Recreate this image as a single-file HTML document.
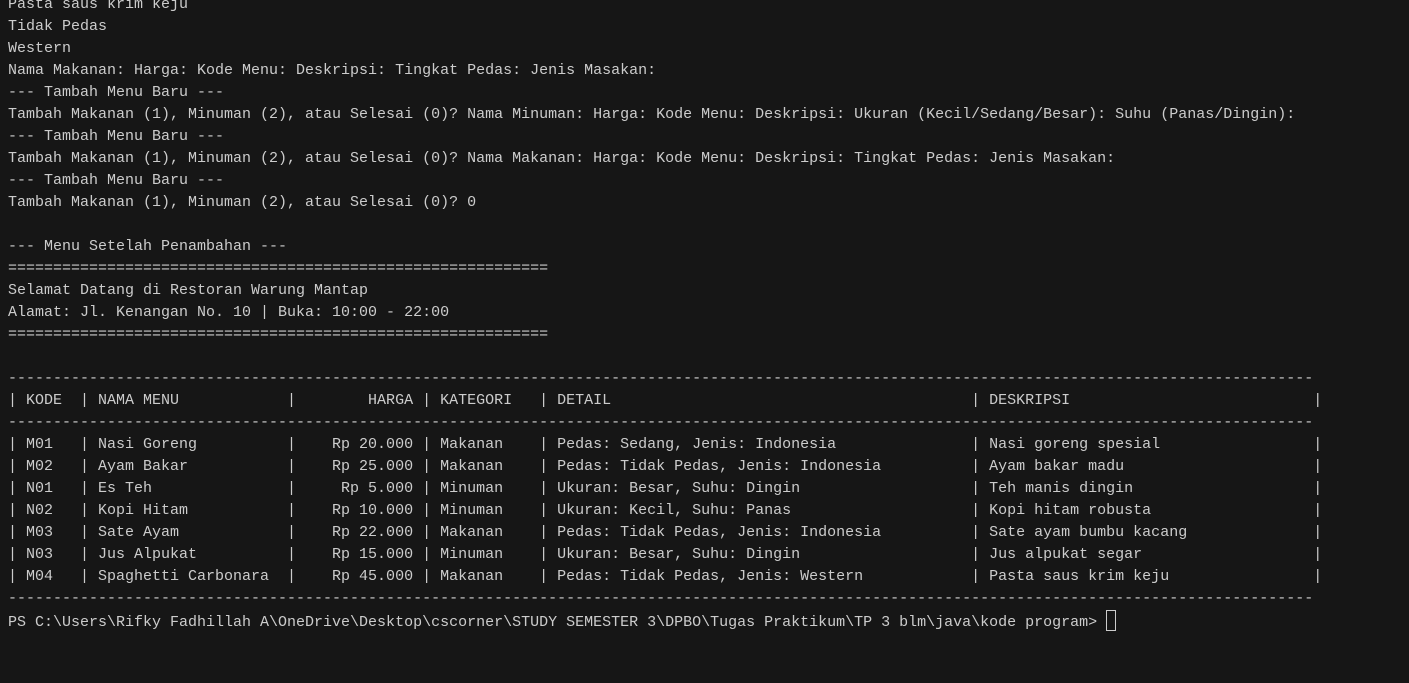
<!DOCTYPE html>
<html><head><style>
html,body{margin:0;padding:0;background:#161616;width:1409px;height:683px;overflow:hidden}
pre{position:absolute;left:8px;top:-6px;margin:0;font-family:"Liberation Mono",monospace;font-size:15px;line-height:22px;color:#cccccc;white-space:pre}
.cur{display:inline-block;width:8px;height:19px;border:1px solid #cccccc;vertical-align:-5px}
</style></head><body>
<pre>Pasta saus krim keju
Tidak Pedas
Western
Nama Makanan: Harga: Kode Menu: Deskripsi: Tingkat Pedas: Jenis Masakan:
--- Tambah Menu Baru ---
Tambah Makanan (1), Minuman (2), atau Selesai (0)? Nama Minuman: Harga: Kode Menu: Deskripsi: Ukuran (Kecil/Sedang/Besar): Suhu (Panas/Dingin):
--- Tambah Menu Baru ---
Tambah Makanan (1), Minuman (2), atau Selesai (0)? Nama Makanan: Harga: Kode Menu: Deskripsi: Tingkat Pedas: Jenis Masakan:
--- Tambah Menu Baru ---
Tambah Makanan (1), Minuman (2), atau Selesai (0)? 0

--- Menu Setelah Penambahan ---
============================================================
Selamat Datang di Restoran Warung Mantap
Alamat: Jl. Kenangan No. 10 | Buka: 10:00 - 22:00
============================================================

-------------------------------------------------------------------------------------------------------------------------------------------------
| KODE  | NAMA MENU            |        HARGA | KATEGORI   | DETAIL                                        | DESKRIPSI                           |
-------------------------------------------------------------------------------------------------------------------------------------------------
| M01   | Nasi Goreng          |    Rp 20.000 | Makanan    | Pedas: Sedang, Jenis: Indonesia               | Nasi goreng spesial                 |
| M02   | Ayam Bakar           |    Rp 25.000 | Makanan    | Pedas: Tidak Pedas, Jenis: Indonesia          | Ayam bakar madu                     |
| N01   | Es Teh               |     Rp 5.000 | Minuman    | Ukuran: Besar, Suhu: Dingin                   | Teh manis dingin                    |
| N02   | Kopi Hitam           |    Rp 10.000 | Minuman    | Ukuran: Kecil, Suhu: Panas                    | Kopi hitam robusta                  |
| M03   | Sate Ayam            |    Rp 22.000 | Makanan    | Pedas: Tidak Pedas, Jenis: Indonesia          | Sate ayam bumbu kacang              |
| N03   | Jus Alpukat          |    Rp 15.000 | Minuman    | Ukuran: Besar, Suhu: Dingin                   | Jus alpukat segar                   |
| M04   | Spaghetti Carbonara  |    Rp 45.000 | Makanan    | Pedas: Tidak Pedas, Jenis: Western            | Pasta saus krim keju                |
-------------------------------------------------------------------------------------------------------------------------------------------------
PS C:\Users\Rifky Fadhillah A\OneDrive\Desktop\cscorner\STUDY SEMESTER 3\DPBO\Tugas Praktikum\TP 3 blm\java\kode program&gt; <span class="cur"></span></pre>
</body></html>
